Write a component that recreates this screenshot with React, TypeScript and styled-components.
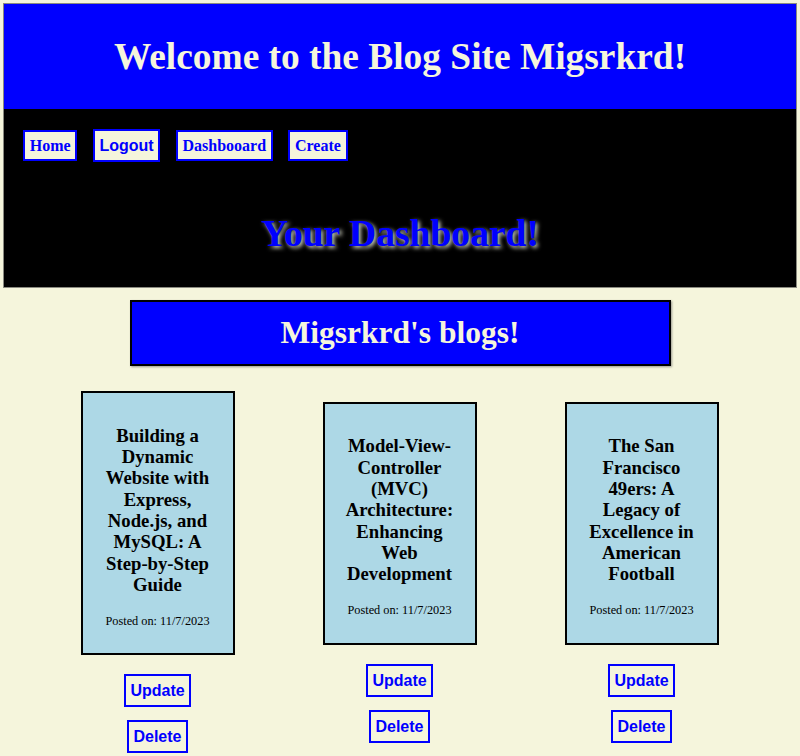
import React from "react";
import styled, { createGlobalStyle } from "styled-components";

const GlobalStyle = createGlobalStyle`
  html, body {
    margin: 0;
    padding: 0;
    background: #f5f5dc;
    font-family: "Liberation Serif", "Times New Roman", serif;
  }
`;

const Page = styled.div`
  display: flex;
  flex-direction: column;
  padding: 3px 3px 20px;
`;

const Top = styled.header`
  border: 1px solid #8a8a80;
  display: flex;
  flex-direction: column;
`;

const Banner = styled.div`
  height: 105px;
  background: #0000ff;
  display: flex;
  align-items: center;
  justify-content: center;
`;

const SiteTitle = styled.h1`
  margin: 0;
  color: #f5f5dc;
  font-size: 37.4px;
  font-weight: bold;
`;

const NavArea = styled.nav`
  background: #000;
  padding: 20px 19px 0;
  display: flex;
  flex-direction: column;
`;

const NavRow = styled.div`
  display: flex;
  align-items: center;
  gap: 15.5px;
`;

const NavLink = styled.a`
  display: inline-block;
  background: #f5f5dc;
  color: #0000ff;
  border: 2px solid #0000ff;
  padding: 5px 4.7px;
  line-height: 17px;
  font-family: "Liberation Serif", "Times New Roman", serif;
  font-weight: bold;
  font-size: 16px;
  text-decoration: none;
`;

const ActionButton = styled.button`
  background: #f5f5dc;
  color: #0000ff;
  border: 2px solid #0000ff;
  padding: 5px 4.7px;
  margin: 0;
  line-height: 19px;
  font-family: "Liberation Sans", Arial, sans-serif;
  font-weight: bold;
  font-size: 16px;
  cursor: pointer;
`;

const DashTitle = styled.h2`
  margin: 51px 0 32px;
  text-align: center;
  color: #0000ff;
  font-size: 37.6px;
  line-height: 42px;
  font-weight: bold;
  text-shadow: 2px 2px 4px #d8d8c8;
`;

const BlogsBanner = styled.h2`
  align-self: center;
  margin: 12px 0 0;
  box-sizing: border-box;
  width: 541px;
  background: #0000ff;
  border: 2px solid #000;
  box-shadow: 1px 1px 2px #9a9a90;
  color: #f5f5dc;
  text-align: center;
  font-size: 31.5px;
  line-height: 36px;
  padding: 13px 0;
  font-weight: bold;
`;

const CardsRow = styled.section`
  display: flex;
  justify-content: center;
  align-items: center;
  gap: 88px;
  margin-top: 25px;
  padding-right: 1px;
`;

const Column = styled.div`
  display: flex;
  flex-direction: column;
  align-items: center;
`;

const Card = styled.article`
  width: 110px;
  padding: 13px 20px;
  background: #add8e6;
  border: 2px solid #000;
  text-align: center;
`;

const CardTitle = styled.h3`
  margin: 18.72px 0;
  font-size: 18.72px;
  line-height: 21.3px;
  font-weight: bold;
  color: #000;
`;

const Posted = styled.p`
  margin: 12.3px -10px;
  font-size: 12.3px;
  line-height: 14.1px;
  white-space: nowrap;
  color: #000;
`;

const Actions = styled.div`
  display: flex;
  flex-direction: column;
  align-items: center;
  gap: 13px;
  margin-top: 19px;
`;

const posts = [
  "Building a Dynamic Website with Express, Node.js, and MySQL: A Step-by-Step Guide",
  "Model-View-Controller (MVC) Architecture: Enhancing Web Development",
  "The San Francisco 49ers: A Legacy of Excellence in American Football",
];

export default function App() {
  return (
    <>
      <GlobalStyle />
      <Page>
        <Top>
          <Banner>
            <SiteTitle>Welcome to the Blog Site Migsrkrd!</SiteTitle>
          </Banner>
          <NavArea>
            <NavRow>
              <NavLink href="#">Home</NavLink>
              <ActionButton>Logout</ActionButton>
              <NavLink href="#">Dashbooard</NavLink>
              <NavLink href="#">Create</NavLink>
            </NavRow>
            <DashTitle>Your Dashboard!</DashTitle>
          </NavArea>
        </Top>
        <BlogsBanner>Migsrkrd's blogs!</BlogsBanner>
        <CardsRow>
          {posts.map((title) => (
            <Column key={title}>
              <Card>
                <CardTitle>{title}</CardTitle>
                <Posted>Posted on: 11/7/2023</Posted>
              </Card>
              <Actions>
                <ActionButton>Update</ActionButton>
                <ActionButton>Delete</ActionButton>
              </Actions>
            </Column>
          ))}
        </CardsRow>
      </Page>
    </>
  );
}
